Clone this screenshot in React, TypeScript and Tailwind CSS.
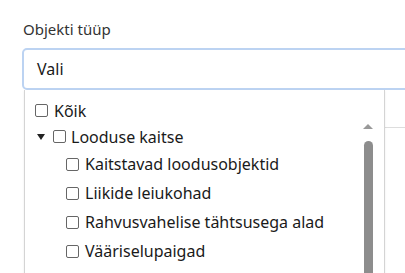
import React from "react";

function Box() {
  return <span className="inline-block w-[13px] h-[13px] border border-[#666] rounded-[2px] bg-white shrink-0" />;
}

export default function App() {
  const children = ["Kaitstavad loodusobjektid", "Liikide leiukohad", "Rahvusvahelise tähtsusega alad", "Vääriselupaigad"];
  return (
    <div className="w-[405px] h-[273px] overflow-hidden bg-white text-[#1a1a1a]" style={{ fontFamily: '"Noto Sans", sans-serif' }}>
      <div className="pt-[19px] pl-[22px]">
        <div className="text-[15px] text-[#333] leading-[20px] pl-[1px]">Objekti tüüp</div>
        <div className="relative mt-[9px]">
          <div className="w-[400px] h-[42px] border-2 border-[#bcd3f2] rounded-[5px] flex items-center pl-[13px] text-[16px]">Vali</div>
          <div className="ml-[362px] mt-[37px] border-t border-[#ddd] h-[40px]" />
          <div className="absolute left-[2px] top-[42px] w-[361px] h-[240px] bg-white border border-[#d4d4d4] border-t-0 shadow-[0_1px_2px_rgba(0,0,0,0.08)]">
            <div className="flex items-center gap-[6px] pl-[10px] h-[25px] mt-[8px] text-[16px]">
              <Box />
              <span>Kõik</span>
            </div>
            <div className="flex items-center pl-[12px] h-[25px] text-[16px] mt-[1px]">
              <span className="w-0 h-0 border-l-[4px] border-r-[4px] border-t-[6px] border-l-transparent border-r-transparent border-t-[#222] mr-[8px]" />
              <Box />
              <span className="ml-[5px]">Looduse kaitse</span>
            </div>
            {children.map((c) => (
              <div key={c} className="flex items-center gap-[6px] pl-[41px] h-[29px] text-[16px] pt-[1px]">
                <Box />
                <span>{c}</span>
              </div>
            ))}
            <div className="absolute right-[11px] top-[34px] flex flex-col items-center">
              <span className="w-0 h-0 border-l-[5px] border-r-[5px] border-b-[5px] border-l-transparent border-r-transparent border-b-[#999]" />
              <span className="mt-[12px] w-[9px] h-[200px] rounded-t-full bg-[#8d8d8d]" />
            </div>
          </div>
        </div>
      </div>
    </div>
  );
}
